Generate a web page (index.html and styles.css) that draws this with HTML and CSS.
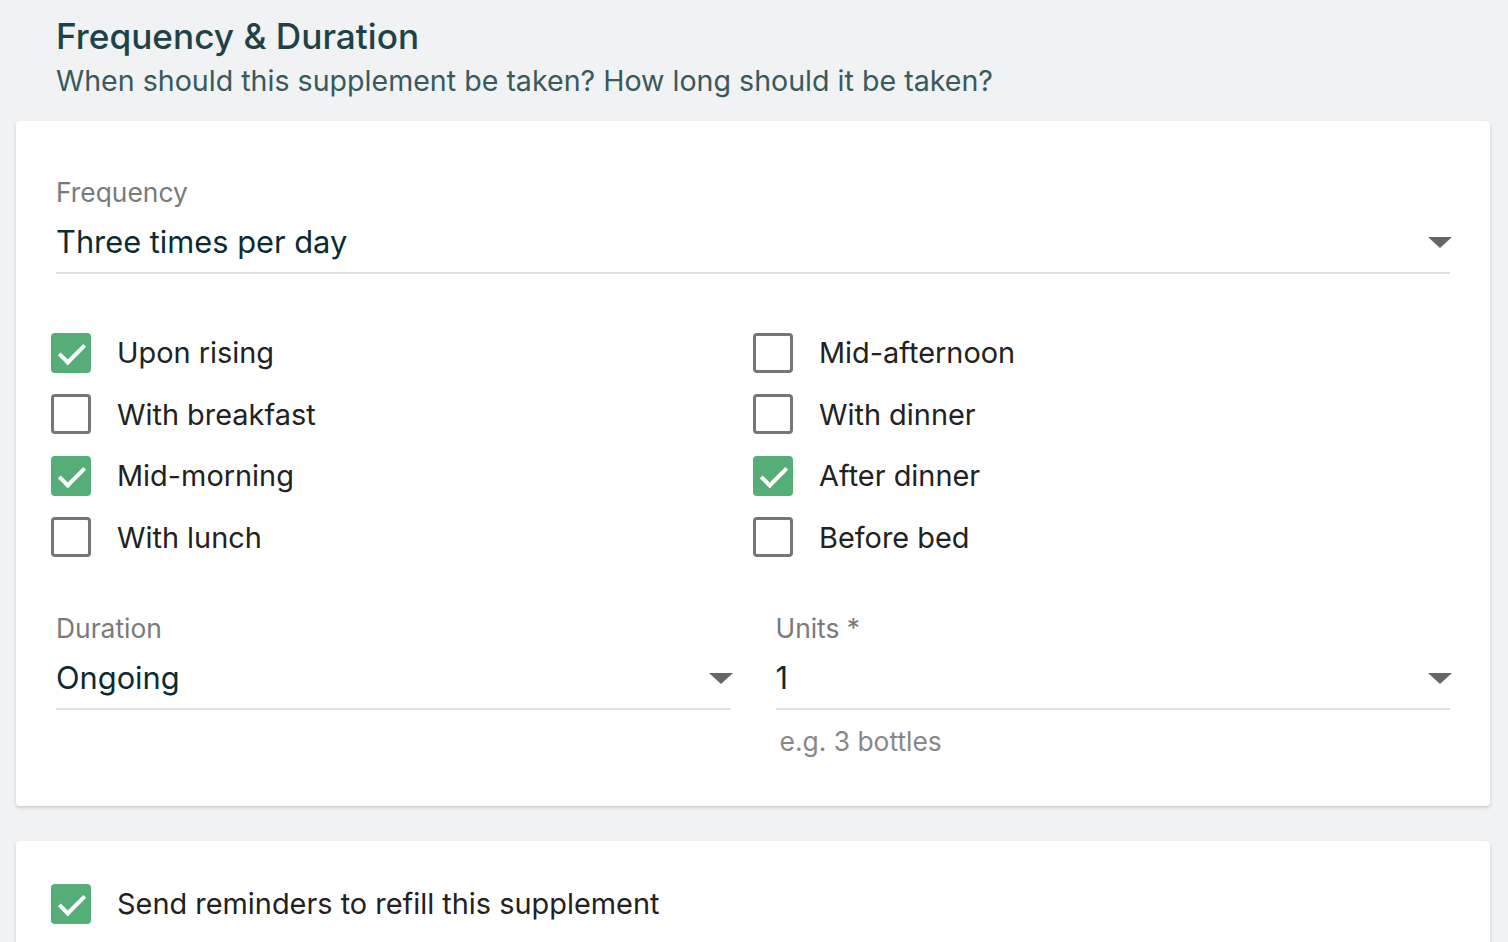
FILE: index.html
```html
<!DOCTYPE html>
<html lang="en">
<head>
    <meta charset="UTF-8">
    <meta name="viewport" content="width=device-width, initial-scale=1.0">
    <title>Frequency &amp; Duration</title>
    <link rel="stylesheet" href="styles.css">
</head>
<body>
    <div class="page">
        <div class="section-header">
            <h1>Frequency &amp; Duration</h1>
            <p>When should this supplement be taken? How long should it be taken?</p>
        </div>

        <div class="card">
            <div class="field">
                <label class="field-label">Frequency</label>
                <div class="field-input">
                    <span>Three times per day</span>
                    <span class="arrow"></span>
                </div>
            </div>

            <div class="times">
                <div class="check"><span class="box checked"></span>Upon rising</div>
                <div class="check"><span class="box"></span>Mid-afternoon</div>
                <div class="check"><span class="box"></span>With breakfast</div>
                <div class="check"><span class="box"></span>With dinner</div>
                <div class="check"><span class="box checked"></span>Mid-morning</div>
                <div class="check"><span class="box checked"></span>After dinner</div>
                <div class="check"><span class="box"></span>With lunch</div>
                <div class="check"><span class="box"></span>Before bed</div>
            </div>

            <div class="field-row">
                <div class="field">
                    <label class="field-label">Duration</label>
                    <div class="field-input">
                        <span>Ongoing</span>
                        <span class="arrow"></span>
                    </div>
                </div>
                <div class="field">
                    <label class="field-label">Units *</label>
                    <div class="field-input">
                        <span>1</span>
                        <span class="arrow"></span>
                    </div>
                    <div class="helper">e.g. 3 bottles</div>
                </div>
            </div>
        </div>

        <div class="card card-small">
            <div class="check"><span class="box checked"></span>Send reminders to refill this supplement</div>
        </div>
    </div>
</body>
</html>
```

FILE: styles.css
```css
* {
    margin: 0;
    padding: 0;
    box-sizing: border-box;
}

body {
    background: #f0f2f4;
    font-family: 'Inter', 'Noto Sans', sans-serif;
    overflow: hidden;
}

.page {
    padding: 0 18px 0 16px;
}

.section-header {
    padding: 14px 0 0 40px;
    height: 121px;
}

.section-header h1 {
    font-size: 35.2px;
    line-height: 44px;
    font-weight: 500;
    color: #1e4347;
}

.section-header p {
    font-size: 28.6px;
    line-height: 46px;
    color: #385a5d;
}

.card {
    background: white;
    border-radius: 4px;
    box-shadow: 0 2px 4px rgba(0,0,0,0.12), 0 1px 2px rgba(0,0,0,0.06);
    padding: 56px 40px 50px 40px;
}

.card-small {
    margin-top: 35px;
    padding: 32px 40px 40px 40px;
}

.field-label {
    display: block;
    font-size: 26.4px;
    line-height: 30px;
    color: #7a7a7a;
}

.field-input {
    margin-top: 15px;
    display: flex;
    align-items: center;
    justify-content: space-between;
    font-size: 30.8px;
    line-height: 40px;
    color: #0b2b33;
    padding-bottom: 10px;
    border-bottom: 2px solid #e0e0e0;
}

.arrow {
    width: 0;
    height: 0;
    border-left: 12px solid transparent;
    border-right: 12px solid transparent;
    border-top: 11px solid #666;
    margin-right: -2px;
}

.helper {
    margin-top: 16px;
    padding-left: 4px;
    font-size: 26.4px;
    line-height: 30px;
    color: #888;
}

.times {
    display: grid;
    grid-template-columns: 702px 1fr;
    margin: 48px 0 0 -5px;
}

.check {
    display: flex;
    align-items: center;
    height: 61.5px;
    font-size: 28.9px;
    color: #222;
}

.card-small .check {
    margin-left: -5px;
}

.box {
    width: 40px;
    height: 40px;
    border: 3px solid #767676;
    border-radius: 4px;
    margin-right: 26px;
    flex-shrink: 0;
    position: relative;
}

.box.checked {
    border: none;
    background: #55ae78;
}

.box.checked::after {
    content: '';
    position: absolute;
    left: 14px;
    top: 5px;
    width: 10px;
    height: 22px;
    border-right: 4px solid white;
    border-bottom: 4px solid white;
    transform: rotate(45deg);
}

.field-row {
    display: grid;
    grid-template-columns: 1fr 1fr;
    gap: 45px;
    margin-top: 45px;
}
```
